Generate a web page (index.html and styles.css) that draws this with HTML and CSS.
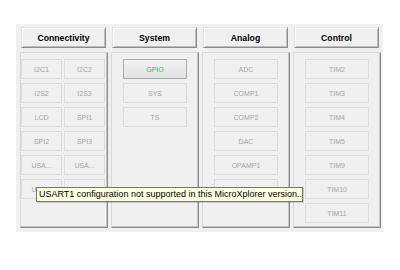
FILE: index.html
```html
<!DOCTYPE html>
<html lang="en">
<head>
  <meta charset="UTF-8">
  <title>Peripherals</title>
  <link rel="stylesheet" href="styles.css">
</head>
<body>
  <div class="panel">
    <div class="column">
      <div class="header">Connectivity</div>
      <div class="body grid2">
        <div class="item">I2C1</div>
        <div class="item">I2C2</div>
        <div class="item">I2S2</div>
        <div class="item">I2S3</div>
        <div class="item">LCD</div>
        <div class="item">SPI1</div>
        <div class="item">SPI2</div>
        <div class="item">SPI3</div>
        <div class="item">USA...</div>
        <div class="item">USA...</div>
        <div class="item">USA...</div>
        <div class="item">USA...</div>
      </div>
    </div>
    <div class="column">
      <div class="header">System</div>
      <div class="body">
        <div class="item on">GPIO</div>
        <div class="item">SYS</div>
        <div class="item">TS</div>
      </div>
    </div>
    <div class="column">
      <div class="header">Analog</div>
      <div class="body">
        <div class="item">ADC</div>
        <div class="item">COMP1</div>
        <div class="item">COMP2</div>
        <div class="item">DAC</div>
        <div class="item">OPAMP1</div>
        <div class="item">OPAMP2</div>
      </div>
    </div>
    <div class="column">
      <div class="header">Control</div>
      <div class="body">
        <div class="item">TIM2</div>
        <div class="item">TIM3</div>
        <div class="item">TIM4</div>
        <div class="item">TIM5</div>
        <div class="item">TIM9</div>
        <div class="item">TIM10</div>
        <div class="item">TIM11</div>
      </div>
    </div>
    <div class="tooltip">USART1 configuration not supported in this MicroXplorer version..</div>
  </div>
</body>
</html>
```

FILE: styles.css
```css
body { margin: 0; background: #fff; font-family: "Liberation Sans", Arial, sans-serif; }
.panel { position: relative; margin: 24px 0 0 16px; width: 367px; height: 208px; box-sizing: border-box; padding: 3px 2px 3px 4px; background: #f0f0f0; display: grid; grid-template-columns: repeat(4, 88px); column-gap: 3px; }
.column { display: flex; flex-direction: column; }
.header { height: 21px; margin: 0 2px 4px 1px; box-sizing: border-box; border: 1px solid; border-color: #e3e3e3 #8c8c8c #8c8c8c #e3e3e3; box-shadow: inset 1px 1px #fff, inset -1px -1px #bdbdbd; background: #f0f0f0; font-size: 8.7px; font-weight: bold; color: #000; display: flex; align-items: center; justify-content: center; }
.body { flex: 1; box-sizing: border-box; border: 1px solid; border-color: #d8d8d8 #8c8c8c #8c8c8c #d8d8d8; box-shadow: inset -1px -1px #c4c4c4; padding: 6px 11px 0 11px; display: flex; flex-direction: column; gap: 4px; margin-bottom: 1px; }
.body.grid2 { display: grid; grid-template-columns: 41px 41px; grid-auto-rows: 20px; gap: 4px 2px; padding: 6px 2px 0 0; align-content: start; }
.item { height: 20px; box-sizing: border-box; border: 1px solid #dcdcdc; background: #f0f0f0; color: #a4a4a4; font-size: 7px; display: flex; align-items: center; justify-content: center; }
.item.on { border-color: #adadad; background: linear-gradient(#f2f2f2, #e2e2e2); color: #1fc81f; }
.tooltip { position: absolute; left: 20px; top: 163px; width: 267px; height: 15px; box-sizing: border-box; border: 1px solid #767676; background: #ffffe1; color: #000; font-size: 9px; line-height: 13px; padding-left: 2px; white-space: nowrap; overflow: hidden; box-shadow: 1px 1px 0 rgba(0,0,0,0.15); }
```
